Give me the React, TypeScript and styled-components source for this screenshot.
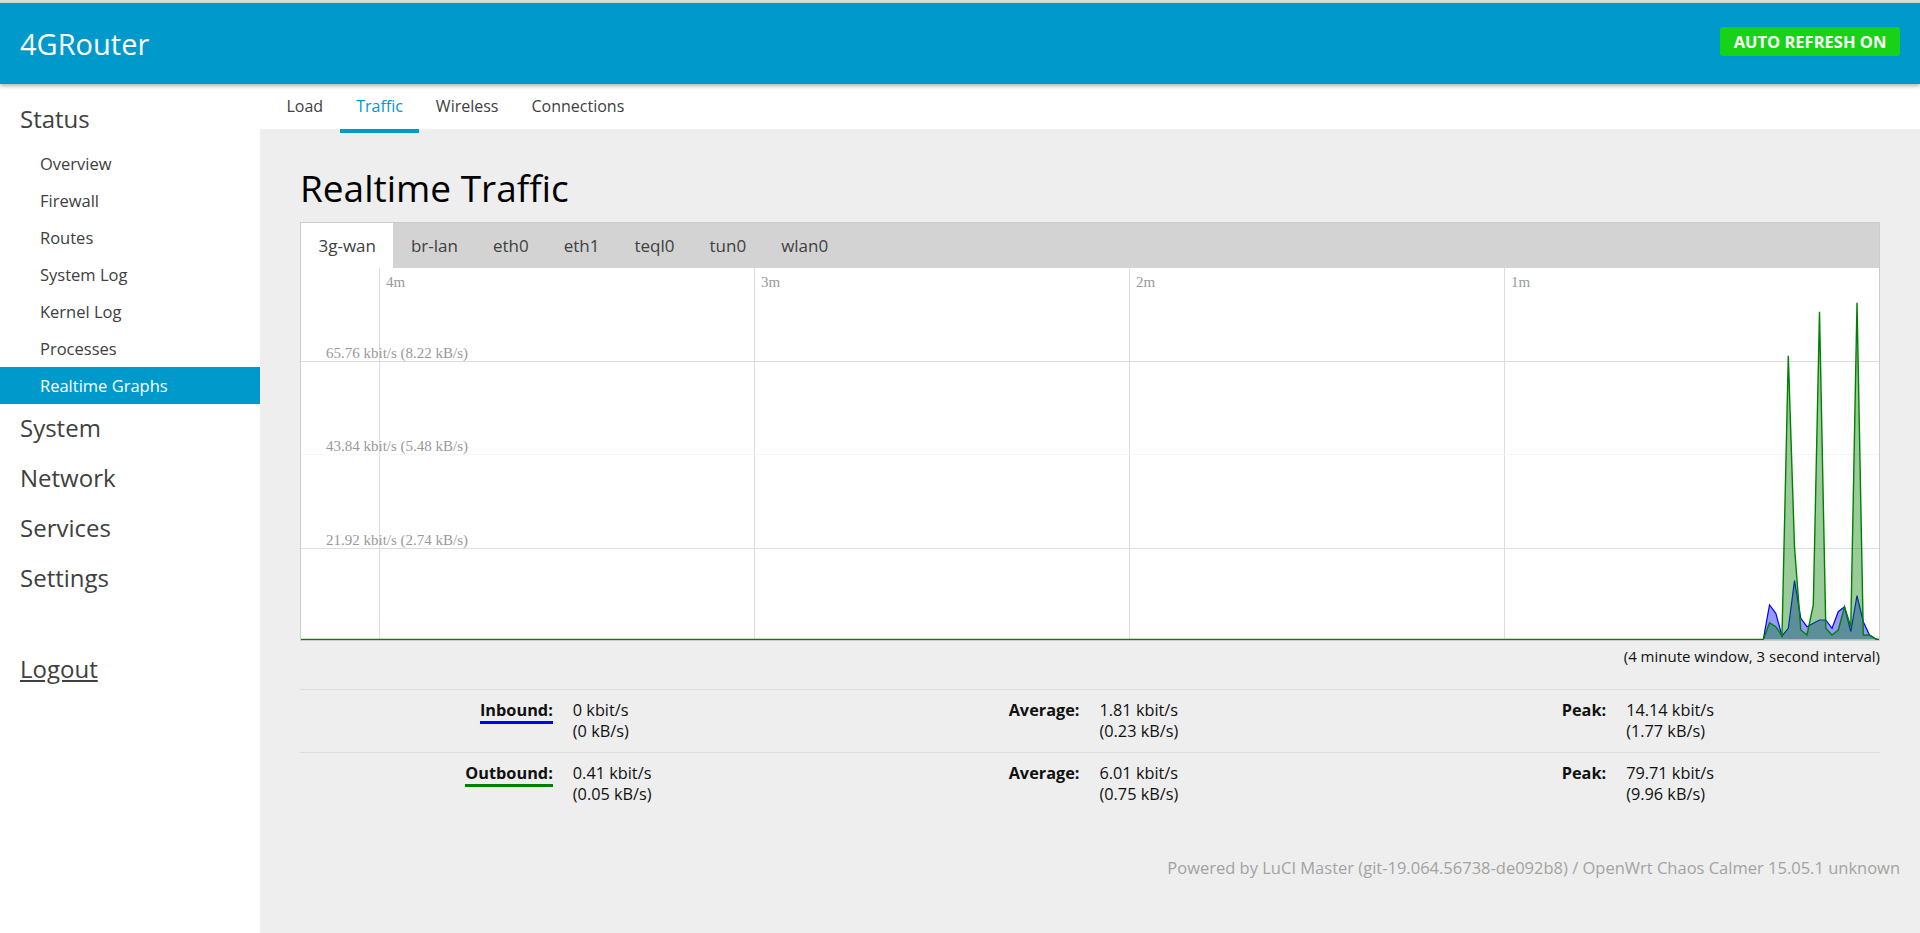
import React from "react";
import styled, { createGlobalStyle } from "styled-components";

const GlobalStyle = createGlobalStyle`
  html, body { margin: 0; padding: 0; }
  body {
    font-family: "Open Sans", "Noto Sans", "DejaVu Sans", sans-serif;
    background: #fff;
    color: #404040;
  }
  * { box-sizing: border-box; }
`;

const Page = styled.div`
  min-height: 100vh;
  display: flex;
  flex-direction: column;
  border-top: 3px solid #dcdcdc;
`;

const Header = styled.header`
  height: 81px;
  flex-shrink: 0;
  background: #0099cc;
  display: flex;
  align-items: center;
  justify-content: space-between;
  padding: 0 20px;
  box-shadow: 0 2px 4px rgba(0, 0, 0, 0.3);
  position: relative;
  z-index: 2;
`;

const Brand = styled.a`
  color: #fff;
  font-size: 29px;
  line-height: 1;
  text-decoration: none;
`;

const RefreshBadge = styled.span`
  width: 180px;
  height: 29px;
  margin-top: -4px;
  display: flex;
  align-items: center;
  justify-content: center;
  background: #17d217;
  color: #fff;
  font-weight: 700;
  font-size: 16.5px;
  border-radius: 3px;
`;

const Body = styled.div`
  flex: 1;
  display: flex;
`;

const Sidebar = styled.nav`
  width: 260px;
  flex-shrink: 0;
  background: #fff;
  padding-top: 10px;
`;

const MenuHeading = styled.div`
  font-size: 24px;
  line-height: 50px;
  padding-left: 20px;
  color: #404040;
`;

const SubMenu = styled.ul`
  list-style: none;
  margin: 1px 0 -1px;
  padding: 0;
`;

const SubItem = styled.li<{ $active?: boolean }>`
  font-size: 16.5px;
  line-height: 37px;
  padding-left: 40px;
  background: ${(p) => (p.$active ? "#0099cc" : "transparent")};
  color: ${(p) => (p.$active ? "#fff" : "#404040")};
`;

const Logout = styled.a`
  display: inline-block;
  margin-top: 41px;
  margin-left: 20px;
  font-size: 24px;
  line-height: 50px;
  color: #404040;
  text-decoration: underline;
`;

const Main = styled.main`
  flex: 1;
  background: #eeeeee;
  display: flex;
  flex-direction: column;
`;

const TabsNav = styled.ul`
  list-style: none;
  margin: 0;
  height: 45px;
  background: #fff;
  padding: 0 0 0 10px;
  display: flex;
`;

const PageTab = styled.li<{ $active?: boolean }>`
  position: relative;
  padding: 0 16.5px;
  line-height: 45px;
  font-size: 16px;
  color: ${(p) => (p.$active ? "#0099cc" : "#404040")};
  &::after {
    content: "";
    display: ${(p) => (p.$active ? "block" : "none")};
    position: absolute;
    left: 0;
    right: 0;
    bottom: -4px;
    height: 4px;
    background: #0099cc;
  }
`;

const Content = styled.div`
  padding: 37px 40px 0;
`;

const Title = styled.h2`
  margin: 0 0 13px;
  font-size: 37px;
  line-height: 43px;
  font-weight: 400;
  color: #000;
`;

const GraphBox = styled.div`
  border: 1px solid #cccccc;
  background: #fff;
`;

const GraphTabs = styled.ul`
  list-style: none;
  margin: 0;
  padding: 0;
  display: flex;
  height: 45px;
  background: #d3d3d3;
`;

const GraphTab = styled.li<{ $active?: boolean }>`
  padding: 0 17.5px;
  line-height: 45px;
  font-size: 17px;
  color: #404040;
  background: ${(p) => (p.$active ? "#fff" : "transparent")};
`;

const Chart = styled.svg`
  display: block;
  width: 100%;
  height: 372px;
`;

const Caption = styled.div`
  margin-top: 5px;
  text-align: right;
  font-size: 15px;
  line-height: 21px;
  color: #111;
`;

const Stats = styled.div`
  margin-top: 22px;
`;

const StatsRow = styled.div`
  display: grid;
  grid-template-columns: repeat(3, 48fr 52fr);
  border-top: 1px solid #dddddd;
  padding: 10px 0;
  font-size: 16.3px;
  line-height: 21px;
  color: #111;
`;

const StatLabel = styled.div`
  text-align: right;
  font-weight: 700;
`;

const LegendText = styled.span<{ $color: string }>`
  border-bottom: 3px solid ${(p) => p.$color};
`;

const StatValue = styled.div`
  padding-left: 20px;
`;

const Footer = styled.footer`
  padding: 42px 20px 18px;
  text-align: right;
  color: #a3a3a3;
  font-size: 16.5px;
  line-height: 21px;
`;

const W = 1578;
const H = 372;
const BASE = 371.5;
const startX = 1462.3;
const step = 6.25;
const inboundY = [BASE, 337, 345.3, 368, 360.3, 312.7, 350.3, 358.7, 355.3, 352, 352, 360.3, 343.7, 338.7, 363.7, 327.7, 353.7, 367, 371];
const outboundY = [BASE, 354.7, 358.7, 368, 87.7, 278.7, 362, 367, 337, 43.7, 360.3, 367, 362, 338.7, 358.7, 34.7, 367, 367, 371];

const toPoints = (ys: number[]) =>
  [[0, BASE], ...ys.map((y, i) => [startX + step * i, y]), [W, BASE]]
    .map(([x, y]) => `${x.toFixed(1)},${y}`)
    .join(" ");

const vLines = [4, 3, 2, 1].map((m) => ({ x: W - 375 * m + 0.5, label: `${m}m` }));
const hLines = [
  { y: 93.5, label: "65.76 kbit/s (8.22 kB/s)", color: "#dddddd" },
  { y: 186.5, label: "43.84 kbit/s (5.48 kB/s)", color: "#f6f6f6" },
  { y: 280.5, label: "21.92 kbit/s (2.74 kB/s)", color: "#dddddd" },
];

function TrafficChart() {
  const inPts = toPoints(inboundY);
  const outPts = toPoints(outboundY);
  return (
    <Chart viewBox={`0 0 ${W} ${H}`} preserveAspectRatio="none">
      {vLines.map((l) => (
        <line key={l.label} x1={l.x} y1={0} x2={l.x} y2={H} stroke="#dddddd" strokeWidth={1} />
      ))}
      {hLines.map((l) => (
        <line key={l.label} x1={0} y1={l.y} x2={W} y2={l.y} stroke={l.color} strokeWidth={1} />
      ))}
      {vLines.map((l) => (
        <text key={"t" + l.label} x={l.x + 6.5} y={19} fill="#999" fontSize={15} fontFamily='"Liberation Serif", serif'>
          {l.label}
        </text>
      ))}
      {hLines.map((l) => (
        <text key={"t" + l.label} x={25} y={l.y - 3.5} fill="#999" fontSize={15} fontFamily='"Liberation Serif", serif'>
          {l.label}
        </text>
      ))}
      <polygon points={inPts} fill="rgba(0,0,255,0.4)" stroke="none" />
      <polyline points={inPts} fill="none" stroke="rgb(0,0,255)" strokeWidth={1.2} />
      <polygon points={outPts} fill="rgba(0,128,0,0.4)" stroke="none" />
      <polyline points={outPts} fill="none" stroke="rgb(0,128,0)" strokeWidth={1.4} />
    </Chart>
  );
}

const subItems = ["Overview", "Firewall", "Routes", "System Log", "Kernel Log", "Processes", "Realtime Graphs"];
const pageTabs = ["Load", "Traffic", "Wireless", "Connections"];
const ifaces = ["3g-wan", "br-lan", "eth0", "eth1", "teql0", "tun0", "wlan0"];

const rows = [
  {
    label: "Inbound:",
    color: "blue",
    cur: ["0 kbit/s", "(0 kB/s)"],
    avg: ["1.81 kbit/s", "(0.23 kB/s)"],
    peak: ["14.14 kbit/s", "(1.77 kB/s)"],
  },
  {
    label: "Outbound:",
    color: "green",
    cur: ["0.41 kbit/s", "(0.05 kB/s)"],
    avg: ["6.01 kbit/s", "(0.75 kB/s)"],
    peak: ["79.71 kbit/s", "(9.96 kB/s)"],
  },
];

export default function App() {
  return (
    <>
      <GlobalStyle />
      <Page>
        <Header>
          <Brand>4GRouter</Brand>
          <RefreshBadge>AUTO REFRESH ON</RefreshBadge>
        </Header>
        <Body>
          <Sidebar>
            <MenuHeading>Status</MenuHeading>
            <SubMenu>
              {subItems.map((s) => (
                <SubItem key={s} $active={s === "Realtime Graphs"}>
                  {s}
                </SubItem>
              ))}
            </SubMenu>
            <MenuHeading>System</MenuHeading>
            <MenuHeading>Network</MenuHeading>
            <MenuHeading>Services</MenuHeading>
            <MenuHeading>Settings</MenuHeading>
            <Logout>Logout</Logout>
          </Sidebar>
          <Main>
            <TabsNav>
              {pageTabs.map((t) => (
                <PageTab key={t} $active={t === "Traffic"}>
                  {t}
                </PageTab>
              ))}
            </TabsNav>
            <Content>
              <Title>Realtime Traffic</Title>
              <GraphBox>
                <GraphTabs>
                  {ifaces.map((t) => (
                    <GraphTab key={t} $active={t === "3g-wan"}>
                      {t}
                    </GraphTab>
                  ))}
                </GraphTabs>
                <TrafficChart />
              </GraphBox>
              <Caption>(4 minute window, 3 second interval)</Caption>
              <Stats>
                {rows.map((r) => (
                  <StatsRow key={r.label}>
                    <StatLabel>
                      <LegendText $color={r.color}>{r.label}</LegendText>
                    </StatLabel>
                    <StatValue>
                      {r.cur[0]}
                      <br />
                      {r.cur[1]}
                    </StatValue>
                    <StatLabel>Average:</StatLabel>
                    <StatValue>
                      {r.avg[0]}
                      <br />
                      {r.avg[1]}
                    </StatValue>
                    <StatLabel>Peak:</StatLabel>
                    <StatValue>
                      {r.peak[0]}
                      <br />
                      {r.peak[1]}
                    </StatValue>
                  </StatsRow>
                ))}
              </Stats>
            </Content>
            <Footer>Powered by LuCI Master (git-19.064.56738-de092b8) / OpenWrt Chaos Calmer 15.05.1 unknown</Footer>
          </Main>
        </Body>
      </Page>
    </>
  );
}
